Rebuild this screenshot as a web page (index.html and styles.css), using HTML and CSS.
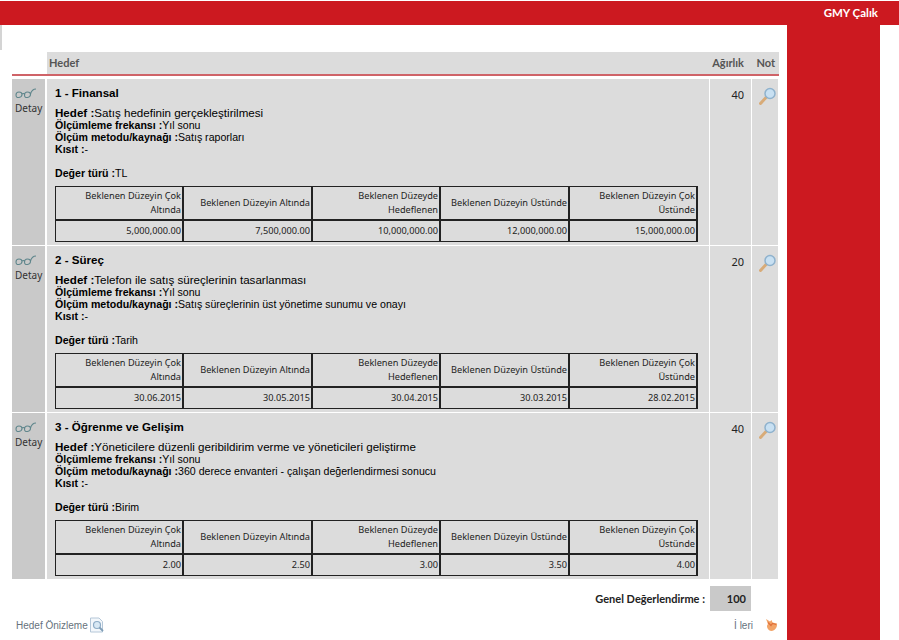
FILE: index.html
```html
<!DOCTYPE html>
<html lang="tr">
<head>
<meta charset="utf-8">
<title>Hedef</title>
<link rel="stylesheet" href="styles.css">
</head>
<body>
<header class="topbar"><span class="user">GMY Çalık</span></header>
<div class="page">
  <main class="content">
    <div class="corner"></div>
    <div class="head">
      <div class="head-cell head-goal">Hedef</div>
      <div class="head-cell head-num">Ağırlık</div>
      <div class="head-cell head-note">Not</div>
    </div>
    <div class="rule"></div>

    <section class="row">
      <div class="detail">
        <svg class="glasses" viewBox="0 0 22 12"><g fill="none" stroke="#5f868c" stroke-width="1.100"><path d="M1 7q0-3 3-3t3 2.500-3 3-3-2.500zM9.500 7q0-3 3-3t3 2.500-3 3-3-2.500zM7 6q1.500-1 2.500 0M15.500 6Q17 1 21 1"/></g></svg>
        <span class="detail-label">Detay</span>
      </div>
      <div class="goal">
        <h2>1 - Finansal</h2>
        <p class="lead"><b>Hedef :</b>Satış hedefinin gerçekleştirilmesi</p>
        <p><b>Ölçümleme frekansı :</b>Yıl sonu</p>
        <p><b>Ölçüm metodu/kaynağı :</b>Satış raporları</p>
        <p><b>Kısıt :</b>-</p>
        <p class="type"><b>Değer türü :</b>TL</p>
        <div class="levels">
          <div>Beklenen Düzeyin Çok Altında</div><div>Beklenen Düzeyin Altında</div><div>Beklenen Düzeyde Hedeflenen</div><div>Beklenen Düzeyin Üstünde</div><div>Beklenen Düzeyin Çok Üstünde</div>
          <div>5,000,000.00</div><div>7,500,000.00</div><div>10,000,000.00</div><div>12,000,000.00</div><div>15,000,000.00</div>
        </div>
      </div>
      <div class="weight">40</div>
      <div class="note">
        <svg class="lens" viewBox="0 0 18 18"><path d="M1.500 16.500 7 10.500" stroke="#d8ab78" stroke-width="3" stroke-linecap="round"/><circle cx="11" cy="6.500" r="5" fill="#c8e0f2" stroke="#8fb2cd" stroke-width="1.500"/></svg>
      </div>
    </section>

    <section class="row">
      <div class="detail">
        <svg class="glasses" viewBox="0 0 22 12"><g fill="none" stroke="#5f868c" stroke-width="1.100"><path d="M1 7q0-3 3-3t3 2.500-3 3-3-2.500zM9.500 7q0-3 3-3t3 2.500-3 3-3-2.500zM7 6q1.500-1 2.500 0M15.500 6Q17 1 21 1"/></g></svg>
        <span class="detail-label">Detay</span>
      </div>
      <div class="goal">
        <h2>2 - Süreç</h2>
        <p class="lead"><b>Hedef :</b>Telefon ile satış süreçlerinin tasarlanması</p>
        <p><b>Ölçümleme frekansı :</b>Yıl sonu</p>
        <p><b>Ölçüm metodu/kaynağı :</b>Satış süreçlerinin üst yönetime sunumu ve onayı</p>
        <p><b>Kısıt :</b>-</p>
        <p class="type"><b>Değer türü :</b>Tarih</p>
        <div class="levels">
          <div>Beklenen Düzeyin Çok Altında</div><div>Beklenen Düzeyin Altında</div><div>Beklenen Düzeyde Hedeflenen</div><div>Beklenen Düzeyin Üstünde</div><div>Beklenen Düzeyin Çok Üstünde</div>
          <div>30.06.2015</div><div>30.05.2015</div><div>30.04.2015</div><div>30.03.2015</div><div>28.02.2015</div>
        </div>
      </div>
      <div class="weight">20</div>
      <div class="note">
        <svg class="lens" viewBox="0 0 18 18"><path d="M1.500 16.500 7 10.500" stroke="#d8ab78" stroke-width="3" stroke-linecap="round"/><circle cx="11" cy="6.500" r="5" fill="#c8e0f2" stroke="#8fb2cd" stroke-width="1.500"/></svg>
      </div>
    </section>

    <section class="row">
      <div class="detail">
        <svg class="glasses" viewBox="0 0 22 12"><g fill="none" stroke="#5f868c" stroke-width="1.100"><path d="M1 7q0-3 3-3t3 2.500-3 3-3-2.500zM9.500 7q0-3 3-3t3 2.500-3 3-3-2.500zM7 6q1.500-1 2.500 0M15.500 6Q17 1 21 1"/></g></svg>
        <span class="detail-label">Detay</span>
      </div>
      <div class="goal">
        <h2>3 - Öğrenme ve Gelişim</h2>
        <p class="lead"><b>Hedef :</b>Yöneticilere düzenli geribildirim verme ve yöneticileri geliştirme</p>
        <p><b>Ölçümleme frekansı :</b>Yıl sonu</p>
        <p><b>Ölçüm metodu/kaynağı :</b>360 derece envanteri - çalışan değerlendirmesi sonucu</p>
        <p><b>Kısıt :</b>-</p>
        <p class="type"><b>Değer türü :</b>Birim</p>
        <div class="levels">
          <div>Beklenen Düzeyin Çok Altında</div><div>Beklenen Düzeyin Altında</div><div>Beklenen Düzeyde Hedeflenen</div><div>Beklenen Düzeyin Üstünde</div><div>Beklenen Düzeyin Çok Üstünde</div>
          <div>2.00</div><div>2.50</div><div>3.00</div><div>3.50</div><div>4.00</div>
        </div>
      </div>
      <div class="weight">40</div>
      <div class="note">
        <svg class="lens" viewBox="0 0 18 18"><path d="M1.500 16.500 7 10.500" stroke="#d8ab78" stroke-width="3" stroke-linecap="round"/><circle cx="11" cy="6.500" r="5" fill="#c8e0f2" stroke="#8fb2cd" stroke-width="1.500"/></svg>
      </div>
    </section>

    <div class="total">
      <span class="total-label">Genel Değerlendirme :</span>
      <span class="total-value">100</span>
    </div>

    <footer class="foot">
      <a class="preview">Hedef Önizleme
        <svg class="doc" viewBox="0 0 16 16"><path d="M1.500 1h8.500l3.500 3.500v10.500h-12z" fill="#f3f7fb" stroke="#b5c7d8"/><circle cx="8" cy="8" r="3.500" fill="#d8e8f4" stroke="#8eacc6" stroke-width="1.200"/><path d="M10.500 10.500 14 14" stroke="#7f9db7" stroke-width="1.800"/></svg>
      </a>
      <a class="next">İ leri
        <svg class="arrow" viewBox="0 0 14 14"><path d="M2 1 6 3.500 7.500 2 8.500 4.500 13 5.500C13.500 9 11 13 7.500 13 4 13 1.500 8 4 6z" fill="#f2a468"/><path d="M4 4.500 7 7.500 8.500 5.500 12 6.500" fill="none" stroke="#e0703a" stroke-width="1.200"/></svg>
      </a>
    </footer>
  </main>
  <aside class="side"></aside>
</div>
</body>
</html>
```
FILE: styles.css
```css
* {
  box-sizing: border-box;
}

html,
body {
  margin: 0;
  height: 100%;
}

body {
  background: #fff;
  color: #000;
  font-family: "Liberation Sans", Arial, sans-serif;
  overflow: hidden;
}

.topbar {
  height: 24px;
  margin-top: 1px;
  padding-right: 21px;
  background: #cc1920;
  color: #fff;
  display: flex;
  justify-content: flex-end;
  align-items: center;
  font: 700 11.500px/1 Lato, sans-serif;
}

.page {
  display: flex;
  height: 615px;
  width: 880px;
}

.content {
  position: relative;
  width: 787px;
  padding: 27px 8px 0 12px;
}

.side {
  width: 93px;
  background: #cc1920;
}

.corner {
  position: absolute;
  left: 0;
  top: 0;
  width: 2px;
  height: 25px;
  background: #d4d4d4;
}

.head {
  display: grid;
  grid-template-columns: 662px 42px 26px;
  column-gap: 1px;
  margin-left: 35px;
  height: 22px;
  background: #dcdcdc;
  font: 700 11px/22px Lato, sans-serif;
  color: #555;
}

.head-cell {
  padding: 0 2px;
}

.head-num {
  padding: 0 8px 0 0;
  text-align: right;
}

.head-note {
  padding: 0 4px 0 0;
  text-align: right;
}

.rule {
  height: 2px;
  margin-bottom: 3px;
  background: #cf6368;
}

.row {
  display: grid;
  grid-template-columns: 33px 663px 41px 26px;
  column-gap: 1px;
  height: 167px;
  padding-bottom: 1px;
}

.detail {
  padding: 9px 0 0 3px;
  background: #c9c9c9;
  color: #333;
  font: 10px/14px "Noto Sans", sans-serif;
}

.glasses {
  display: block;
  width: 22px;
  height: 12px;
}

.detail-label {
  display: block;
  margin-top: 1px;
}

.goal {
  margin-left: 1px;
  padding: 6px 0 0 8px;
  background: #dcdcdc;
}

.goal h2 {
  margin: 0 0 6px;
  font-size: 11.600px;
  line-height: 15px;
  font-weight: 700;
}

.goal p {
  margin: 0;
  font-size: 10.600px;
  line-height: 12px;
}

.goal b {
  font-weight: 700;
}

.goal .lead {
  font-size: 11.600px;
  line-height: 13px;
}

.goal .type {
  margin-top: 11px;
  line-height: 14px;
}

.levels {
  display: grid;
  grid-template-columns: 128px 129px 128px 129px 128px;
  width: 643px;
  margin-top: 6px;
  border: 1px solid #222;
  border-width: 1px 0 0 1px;
  font: 9.200px/14px "Noto Sans", sans-serif;
  color: #222;
}

.levels > div {
  display: flex;
  align-items: center;
  justify-content: flex-end;
  height: 34px;
  padding: 0 1px 0 4px;
  border: 1px solid #222;
  border-width: 0 2px 2px 0;
  text-align: right;
}

.levels > div:nth-child(n+6) {
  height: 21px;
  border-bottom-width: 1px;
}

.weight {
  padding: 9px 7px 0 0;
  background: #dcdcdc;
  text-align: right;
  font: 11px/14px "Noto Sans", sans-serif;
  color: #222;
}

.note {
  padding: 8px 0 0 7px;
  background: #dcdcdc;
}

.lens {
  display: block;
  width: 18px;
  height: 18px;
}

.total {
  display: flex;
  justify-content: flex-end;
  align-items: center;
  height: 25px;
  margin-top: 6px;
  padding-right: 28px;
}

.total-label {
  padding-right: 5px;
  font: 700 11px/1 Lato, sans-serif;
  color: #222;
}

.total-value {
  width: 41px;
  height: 25px;
  padding-right: 5px;
  background: #c9c9c9;
  text-align: right;
  font: 700 11px/25px Lato, sans-serif;
  color: #222;
}

.foot {
  display: flex;
  justify-content: space-between;
  align-items: center;
  height: 20px;
  margin: 4px 0 0 4px;
  padding-right: 1px;
  font-size: 10px;
  color: #66727c;
}

.preview,
.next {
  display: flex;
  align-items: center;
}

.doc {
  width: 16px;
  height: 16px;
  margin-left: 1px;
}

.next {
  gap: 11px;
}

.arrow {
  width: 14px;
  height: 14px;
}
```
